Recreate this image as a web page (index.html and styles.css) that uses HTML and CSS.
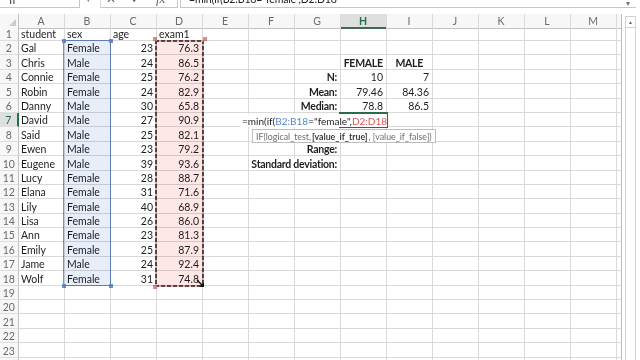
FILE: index.html
```html
<!DOCTYPE html>
<html>
<head>
<meta charset="utf-8">
<link rel="stylesheet" href="styles.css">
</head>
<body>
<div class="fbar">
  <div class="namebox">IF</div>
  <div class="nbdrop">▾</div>
  <div class="fxbox"><span class="fx-x">✕</span><span class="fx-c">✓</span><span class="fx-f">fx</span></div>
  <div class="finput"><span class="ftext">=min(if(B2:B18="female",D2:D18</span><span class="fdrop">▾</span></div>
</div>
<div class="main">
  <div class="sheet">
    <div class="row hdr"><span class="corner"></span><span>A</span><span>B</span><span>C</span><span>D</span><span>E</span><span>F</span><span>G</span><span class="sel">H</span><span>I</span><span>J</span><span>K</span><span>L</span><span>M</span><span class="nn"></span></div>
    <div class="row"><span class="rh">1</span><span>student</span><span>sex</span><span>age</span><span>exam1</span><span></span><span></span><span></span><span></span><span></span><span></span><span></span><span></span><span></span><span class="nn"></span></div>
    <div class="row"><span class="rh">2</span><span>Gal</span><span>Female</span><span class="n">23</span><span class="n">76.3</span><span></span><span></span><span></span><span></span><span></span><span></span><span></span><span></span><span></span><span class="nn"></span></div>
    <div class="row"><span class="rh">3</span><span>Chris</span><span>Male</span><span class="n">24</span><span class="n">86.5</span><span></span><span></span><span></span><span class="ctr b">FEMALE</span><span class="ctr b">MALE</span><span></span><span></span><span></span><span></span><span class="nn"></span></div>
    <div class="row"><span class="rh">4</span><span>Connie</span><span>Female</span><span class="n">25</span><span class="n">76.2</span><span></span><span></span><span class="n b">N:</span><span class="n">10</span><span class="n">7</span><span></span><span></span><span></span><span></span><span class="nn"></span></div>
    <div class="row"><span class="rh">5</span><span>Robin</span><span>Female</span><span class="n">24</span><span class="n">82.9</span><span></span><span></span><span class="n b">Mean:</span><span class="n">79.46</span><span class="n">84.36</span><span></span><span></span><span></span><span></span><span class="nn"></span></div>
    <div class="row"><span class="rh">6</span><span>Danny</span><span>Male</span><span class="n">30</span><span class="n">65.8</span><span></span><span></span><span class="n b">Median:</span><span class="n">78.8</span><span class="n">86.5</span><span></span><span></span><span></span><span></span><span class="nn"></span></div>
    <div class="row"><span class="rh selr">7</span><span>David</span><span>Male</span><span class="n">27</span><span class="n">90.9</span><span></span><span></span><span></span><span></span><span></span><span></span><span></span><span></span><span></span><span class="nn"></span></div>
    <div class="row"><span class="rh">8</span><span>Said</span><span>Male</span><span class="n">25</span><span class="n">82.1</span><span></span><span></span><span></span><span></span><span></span><span></span><span></span><span></span><span></span><span class="nn"></span></div>
    <div class="row"><span class="rh">9</span><span>Ewen</span><span>Male</span><span class="n">23</span><span class="n">79.2</span><span></span><span></span><span class="n b">Range:</span><span></span><span></span><span></span><span></span><span></span><span></span><span class="nn"></span></div>
    <div class="row"><span class="rh">10</span><span>Eugene</span><span>Male</span><span class="n">39</span><span class="n">93.6</span><span></span><span></span><span class="n b"><em class="spill">Standard deviation:</em></span><span></span><span></span><span></span><span></span><span></span><span></span><span class="nn"></span></div>
    <div class="row"><span class="rh">11</span><span>Lucy</span><span>Female</span><span class="n">28</span><span class="n">88.7</span><span></span><span></span><span></span><span></span><span></span><span></span><span></span><span></span><span></span><span class="nn"></span></div>
    <div class="row"><span class="rh">12</span><span>Elana</span><span>Female</span><span class="n">31</span><span class="n">71.6</span><span></span><span></span><span></span><span></span><span></span><span></span><span></span><span></span><span></span><span class="nn"></span></div>
    <div class="row"><span class="rh">13</span><span>Lily</span><span>Female</span><span class="n">40</span><span class="n">68.9</span><span></span><span></span><span></span><span></span><span></span><span></span><span></span><span></span><span></span><span class="nn"></span></div>
    <div class="row"><span class="rh">14</span><span>Lisa</span><span>Female</span><span class="n">26</span><span class="n">86.0</span><span></span><span></span><span></span><span></span><span></span><span></span><span></span><span></span><span></span><span class="nn"></span></div>
    <div class="row"><span class="rh">15</span><span>Ann</span><span>Female</span><span class="n">23</span><span class="n">81.3</span><span></span><span></span><span></span><span></span><span></span><span></span><span></span><span></span><span></span><span class="nn"></span></div>
    <div class="row"><span class="rh">16</span><span>Emily</span><span>Female</span><span class="n">25</span><span class="n">87.9</span><span></span><span></span><span></span><span></span><span></span><span></span><span></span><span></span><span></span><span class="nn"></span></div>
    <div class="row"><span class="rh">17</span><span>Jame</span><span>Male</span><span class="n">24</span><span class="n">92.4</span><span></span><span></span><span></span><span></span><span></span><span></span><span></span><span></span><span></span><span class="nn"></span></div>
    <div class="row"><span class="rh">18</span><span>Wolf</span><span>Female</span><span class="n">31</span><span class="n">74.8</span><span></span><span></span><span></span><span></span><span></span><span></span><span></span><span></span><span></span><span class="nn"></span></div>
    <div class="row"><span class="rh">19</span><span></span><span></span><span></span><span></span><span></span><span></span><span></span><span></span><span></span><span></span><span></span><span></span><span></span><span class="nn"></span></div>
    <div class="row"><span class="rh">20</span><span></span><span></span><span></span><span></span><span></span><span></span><span></span><span></span><span></span><span></span><span></span><span></span><span></span><span class="nn"></span></div>
    <div class="row"><span class="rh">21</span><span></span><span></span><span></span><span></span><span></span><span></span><span></span><span></span><span></span><span></span><span></span><span></span><span></span><span class="nn"></span></div>
    <div class="row"><span class="rh">22</span><span></span><span></span><span></span><span></span><span></span><span></span><span></span><span></span><span></span><span></span><span></span><span></span><span></span><span class="nn"></span></div>
    <div class="row"><span class="rh">23</span><span></span><span></span><span></span><span></span><span></span><span></span><span></span><span></span><span></span><span></span><span></span><span></span><span></span><span class="nn"></span></div>
    <div class="row"><span class="rh">24</span><span></span><span></span><span></span><span></span><span></span><span></span><span></span><span></span><span></span><span></span><span></span><span></span><span></span><span class="nn"></span></div>

    <div class="rng rng-b"><i class="sq tl"></i><i class="sq tr"></i><i class="sq bl"></i><i class="sq br"></i></div>
    <div class="rng rng-d"><i class="sq tl"></i><i class="sq tr"></i><i class="sq bl"></i></div>
    <div class="edit"><span>=min(if(</span><span class="refb">B2:B18</span><span>="female",</span><span class="refd">D2:D18</span></div>
    <div class="active"></div>
    <div class="tip">IF(logical_test, <b>[value_if_true]</b>, [value_if_false])</div>
    <div class="fill"><svg width="9" height="9" viewBox="0 0 9 9"><path d="M1 1 L6.5 6.5" stroke="#111" stroke-width="1.4"/><path d="M8 3.5 L8 8 L3.5 8 Z" fill="#111"/></svg></div>
  </div>
  <div class="vscroll"><div class="vtrack"><div class="vup">▲</div></div></div>
</div>
</body>
</html>
```
FILE: styles.css
```css
html, body {
  margin: 0;
  padding: 0;
}
body {
  width: 640px;
  height: 360px;
  overflow: hidden;
  background: #fff;
  font-family: Lato, "Liberation Sans", sans-serif;
  font-size: 10.5px;
  color: #1e1e1e;
}

/* formula bar (mostly scrolled off the top) */
.fbar {
  display: flex;
  height: 19px;
  margin-top: -11px;
  margin-bottom: 5.6px;
  color: #333;
  font-size: 11px;
}
.namebox {
  width: 80px;
  box-sizing: border-box;
  border-right: 1px solid #c6c6c6;
  border-bottom: 1px solid #c6c6c6;
  padding: 2px 0 0 9px;
  font-family: "Open Sans", sans-serif;
  font-size: 12px;
}
.nbdrop {
  width: 20px;
  color: #777;
  font-size: 9px;
  padding: 4px 0 0 6px;
  box-sizing: border-box;
}
.fxbox {
  width: 78px;
  box-sizing: border-box;
  border-left: 1px solid #d8d8d8;
  border-right: 1px solid #c6c6c6;
  border-bottom: 1px solid #c6c6c6;
  display: flex;
  align-items: flex-start;
  padding-top: 2px;
  color: #666;
}
.fx-x { margin-left: 5px; font-size: 12px; }
.fx-c { margin-left: 15px; font-size: 12px; }
.fx-f { margin-left: 15px; font-style: italic; font-family: "Liberation Serif", serif; font-size: 13px; }
.finput {
  flex: 1;
  margin-left: 2px;
  box-sizing: border-box;
  border-left: 1px solid #c6c6c6;
  border-bottom: 1px solid #c6c6c6;
  display: flex;
  justify-content: space-between;
  padding: 4px 6px 0 8px;
  margin-right: 4px;
}
.ftext { font-size: 10.5px; color: #222; letter-spacing: -0.15px; }
.fdrop { color: #777; font-size: 8px; margin-top: 5px; }

/* sheet */
.main {
  display: flex;
  height: 347px;
}
.sheet {
  position: relative;
  width: 622px;
  overflow: hidden;
}
.row {
  display: grid;
  grid-template-columns: 18.5px repeat(13, 46px) 5.5px;
  height: 14.4px;
}
.row > span {
  box-sizing: border-box;
  border-right: 1px solid #d9d9d9;
  border-bottom: 1px solid #d9d9d9;
  display: flex;
  align-items: flex-end;
  justify-content: flex-start;
  padding: 0 2px 0 2.5px;
  white-space: nowrap;
  line-height: 11px;
  min-width: 0;
}
.row > span.n { justify-content: flex-end; padding-right: 2.5px; }
.row > span.ctr { justify-content: center; }
.row > span.b { font-weight: 700; letter-spacing: -0.25px; }
.row > span.nn { border-right-color: #bdbdbd; }

.row > span.rh {
  background: #f7f7f7;
  color: #6a6a6a;
  justify-content: center;
  padding: 0;
  border-right-color: #c2c2c2;
  border-bottom-color: #dedede;
  font-size: 10.5px;
}
.row > span.selr {
  background: #dfdfdf;
  color: #217346;
  border-right: 2px solid #217346;
}

.hdr { height: 13px; }
.hdr > span {
  background: #f7f7f7;
  color: #6a6a6a;
  justify-content: center;
  align-items: center;
  padding: 2px 0 0;
  border-right-color: #dadada;
  border-bottom-color: #c2c2c2;
  font-size: 10.5px;
}
.hdr > span.sel {
  background: #dfdfdf;
  color: #217346;
  font-weight: 700;
  border-bottom: 2px solid #3f6a52;
}
.hdr > span.corner {
  justify-content: flex-end;
  align-items: flex-end;
  padding: 0 2px 2px 0;
  border-right-color: #c2c2c2;
}
.corner::after {
  content: "";
  width: 0;
  height: 0;
  border-left: 7px solid transparent;
  border-bottom: 7px solid #cbcbcb;
}

.spill {
  font-style: normal;
  background: #fff;
  padding-left: 1px;
}

/* range highlights */
.rng {
  position: absolute;
  box-sizing: border-box;
  mix-blend-mode: multiply;
}
.rng-b {
  left: 63.3px;
  top: 26.8px;
  width: 47.9px;
  height: 246px;
  border: 1.5px solid #6f92d2;
  background: #e8eef9;
}
.rng-d {
  left: 155px;
  top: 26.4px;
  width: 49px;
  height: 246.8px;
  background:
    repeating-linear-gradient(90deg, #5e4a44 0 4px, #eeb5b5 4px 6px) top left / 100% 2px no-repeat,
    repeating-linear-gradient(90deg, #5e4a44 0 4px, #eeb5b5 4px 6px) bottom left / 100% 2px no-repeat,
    repeating-linear-gradient(180deg, #5e4a44 0 4px, #eeb5b5 4px 6px) top left / 2px 100% no-repeat,
    repeating-linear-gradient(180deg, #5e4a44 0 4px, #eeb5b5 4px 6px) top right / 2px 100% no-repeat,
    #fde7e7;
}
.sq {
  position: absolute;
  width: 4px;
  height: 4px;
}
.rng-b .sq { background: #6f92d2; }
.rng-d .sq { background: #e08a8a; }
.sq.tl { left: -2.5px; top: -2.5px; }
.sq.tr { right: -2.5px; top: -2.5px; }
.sq.bl { left: -2.5px; bottom: -2.5px; }
.sq.br { right: -2.5px; bottom: -2.5px; }

.fill {
  position: absolute;
  left: 196px;
  top: 265px;
  width: 9px;
  height: 9px;
  line-height: 0;
}

/* cell editing */
.edit {
  position: absolute;
  right: 235px;
  top: 100.6px;
  height: 12.6px;
  background: #fff;
  display: flex;
  align-items: flex-end;
  padding: 0 0 0 2px;
  font-size: 10px;
  line-height: 11px;
  white-space: nowrap;
  z-index: 3;
  color: #1e1e1e;
}
.refb { color: #5b86cf; }
.refd { color: #d9575a; }
.active {
  position: absolute;
  left: 339.3px;
  top: 98.6px;
  width: 48.4px;
  height: 15.6px;
  box-sizing: border-box;
  border: 2px solid #2b6b47;
  z-index: 2;
}
.tip {
  position: absolute;
  left: 252px;
  top: 115.6px;
  width: 184px;
  height: 14px;
  box-sizing: border-box;
  border: 1px solid #bdbdbd;
  background: #fff;
  color: #6e6e6e;
  font-size: 8.8px;
  padding: 0 3px;
  display: flex;
  align-items: center;
  white-space: nowrap;
  z-index: 4;
}
.tip b { color: #3a3a3a; margin: 0 1px; }

/* scrollbar */
.vscroll {
  width: 18px;
  box-sizing: border-box;
  padding-left: 3px;
}
.vtrack {
  width: 11px;
  height: 100%;
  box-sizing: border-box;
  border-left: 1px solid #d4d4d4;
  border-right: 1px solid #d4d4d4;
}
.vup {
  margin-top: 2.4px;
  height: 10px;
  border-top: 1px solid #cfcfcf;
  border-bottom: 1px solid #cfcfcf;
  font-size: 5px;
  line-height: 10px;
  text-align: center;
  color: #6a6a6a;
}
```
